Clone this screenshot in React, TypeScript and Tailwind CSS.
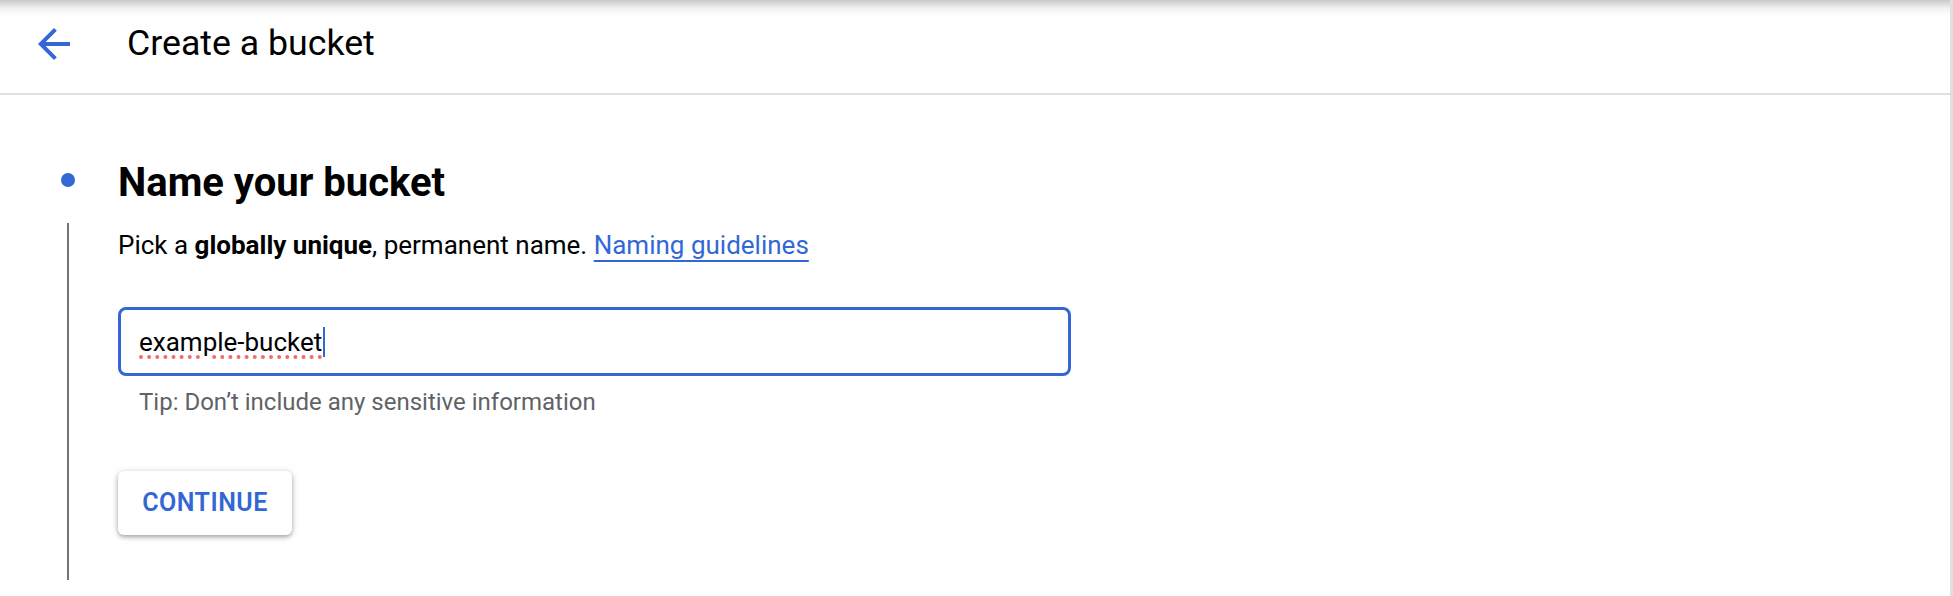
import React from "react";

export default function App() {
  return (
    <div
      className="relative w-[1953px] h-[596px] overflow-hidden bg-white border-r-[3px] border-[#e0e0e0] text-black"
      style={{ fontFamily: "Roboto, 'Liberation Sans', sans-serif" }}
    >
      <div className="pointer-events-none absolute left-0 right-0 top-0 h-[16px] bg-gradient-to-b from-[#c9c9c9] via-[#f0f0f0] to-white/0" />
      <header className="flex h-[95px] items-center border-b-2 border-[#e0e0e0] pl-[30px] pb-[5px]">
        <svg viewBox="0 0 24 24" className="h-[48px] w-[48px]" fill="#3367d6">
          <path d="M20 11H7.83l5.59-5.59L12 4l-8 8 8 8 1.41-1.41L7.83 13H20v-2z" />
        </svg>
        <h1 className="ml-[49px] text-[35.7px] font-normal leading-none">Create a bucket</h1>
      </header>
      <main className="flex pl-[61px] pt-[66px]">
        <div className="flex w-[14px] flex-col items-center">
          <div className="mt-[12px] h-[14px] w-[14px] rounded-full bg-[#3367d6]" />
          <div className="mt-[36px] h-[357px] w-[2px] bg-[#757575]" />
        </div>
        <div className="ml-[43px] flex flex-col items-start">
          <h2 className="text-[40px] font-bold leading-[44px]">Name your bucket</h2>
          <p className="mt-[25px] text-[26px] leading-[30px]">
            Pick a <span className="font-bold">globally unique</span>, permanent name.{" "}
            <a className="text-[#3367d6] underline decoration-[2px] underline-offset-[6px]">Naming guidelines</a>
          </p>
          <div className="mt-[47px] flex h-[69px] w-[953px] items-center rounded-[8px] border-[3px] border-[#3367d6] pl-[18px]">
            <span className="text-[26px] leading-[30px] underline decoration-dotted decoration-[#f26b6b] decoration-[4px] underline-offset-[5px]">
              example-bucket
            </span>
            <span className="ml-[1px] h-[30px] w-[2px] bg-[#3367d6]" />
          </div>
          <p className="ml-[21px] mt-[12px] text-[24px] leading-[28px] text-[#5f6368]">
            Tip: Don’t include any sensitive information
          </p>
          <button className="mt-[55px] h-[64px] w-[174px] rounded-[6px] bg-white text-[25px] font-semibold tracking-[0.5px] text-[#3367d6] shadow-[0_2px_4px_rgba(0,0,0,0.3),0_1px_8px_rgba(0,0,0,0.12)]">
            CONTINUE
          </button>
        </div>
      </main>
    </div>
  );
}
